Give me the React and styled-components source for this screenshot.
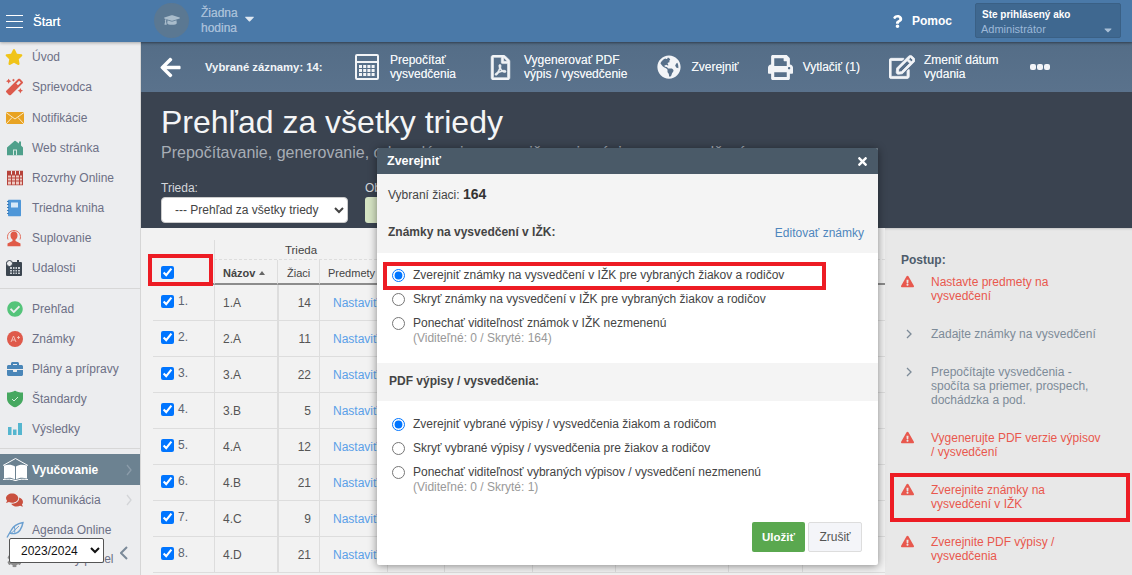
import React from "react";
import styled, { createGlobalStyle } from "styled-components";
import {
  FaStar, FaMagic, FaBriefcase, FaComments, FaCog, FaArrowLeft, FaRegFilePdf,
  FaGlobeAmericas, FaPrint, FaRegEdit, FaQuestion, FaTimes, FaExclamationTriangle,
  FaGraduationCap, FaCaretDown, FaCheckCircle,
} from "react-icons/fa";

const Global = createGlobalStyle`
  html, body { margin: 0; padding: 0; height: 100%; overflow: hidden; }
  body { font-family: "Liberation Sans", Arial, sans-serif; font-size: 12px; color: #555; }
  * { box-sizing: border-box; }
`;

const Page = styled.div`
  position: relative; width: 1132px; height: 575px; overflow: hidden;
  display: flex; flex-direction: column; background: #f2f2f2;
`;

/* top bar */
const TopBar = styled.header`
  flex: 0 0 42px; display: flex; align-items: center; background: #4a79a8; color: #fff;
  box-shadow: 0 1px 3px rgba(0,0,0,.3); position: relative; z-index: 2;
`;
const StartButton = styled.div`
  width: 154px; display: flex; align-items: center; padding-left: 6px; gap: 10px;
  font-size: 13px; text-shadow: 0 0 .4px #fff;
`;
const Burger = styled.span`
  display: block; width: 17px; height: 13px;
  border-top: 1px solid #fff; border-bottom: 1px solid #fff; position: relative;
  &::after { content: ""; position: absolute; left: 0; right: 0; top: 5px; height: 1px; background: #fff; }
`;
const Avatar = styled.span`
  width: 35px; height: 35px; border-radius: 50%; background: #5b7892; display: flex;
  align-items: center; justify-content: center; color: #a9bccb; font-size: 16px; margin-top: -2px;
`;
const Lesson = styled.div`
  margin-left: 12px; font-size: 12px; line-height: 15px; color: #a5bdd7; text-shadow: 0 0 .6px #a5bdd7;
`;
const LessonCaret = styled.span`
  margin-left: 4px; display: flex; font-size: 15px; color: #dfe8f1; margin-top: -6px;
`;
const TopRight = styled.div`
  margin-left: auto; display: flex; align-items: center; padding-right: 11px;
`;
const Help = styled.div`
  display: flex; align-items: center; gap: 8px; font-weight: bold; font-size: 12px; margin-right: 23px;
`;
const UserBox = styled.div`
  width: 146px; height: 35px; margin-top: -2px; background: #3f6890; border: 1px solid #3a6085; border-radius: 2px;
  padding: 4px 5px; position: relative; line-height: 14px;
`;
const UserLabel = styled.div`font-size: 10px; font-weight: bold; color: #fff; padding-left: 1px;`;
const UserName = styled.div`font-size: 11px; color: #9db8d8;`;
const UserCaret = styled.span`
  position: absolute; right: 6px; bottom: 1px; color: #a9bfd6; font-size: 12px; display: flex;
`;

/* body */
const Body = styled.div`flex: 1; display: flex; min-height: 0;`;
const Sidebar = styled.nav`
  flex: 0 0 141px; background: #ecedef; border-right: 1px solid #d6d6d6; display: flex; flex-direction: column;
`;
const Divider = styled.div`height: 1px; background: #d7d7d7; margin: ${(p) => p.$before}px 0 5px;`;
const NavItem = styled.div`
  height: ${(p) => p.$h || 30}px; flex: none; display: flex; align-items: center; position: relative;
  padding: 0 0 ${(p) => p.$lift || 0}px 32px; font-size: 12px;
  color: ${(p) => (p.$active ? "#fff" : "#6c7086")};
  font-weight: ${(p) => (p.$active ? "bold" : "normal")};
  background: ${(p) => (p.$active ? "#6c8291" : "transparent")};
`;
const NavIcon = styled.span`
  position: absolute; left: ${(p) => p.$left ?? 6}px; top: 50%; transform: translateY(-50%);
  display: flex; color: ${(p) => p.$color || "#888"}; font-size: ${(p) => p.$size || 16}px;
`;
const NavArrow = styled.span`
  position: absolute; right: 8px; top: 50%; transform: translateY(-50%); display: flex;
  color: ${(p) => p.$color || "#d3d5d8"};
`;

const Main = styled.main`flex: 1; display: flex; flex-direction: column; min-width: 0;`;

const Toolbar = styled.div`
  flex: 0 0 50px; display: flex; align-items: center; padding-left: 18px; color: #f2f5f8;
  background: linear-gradient(#546d87, #5a728c); font-size: 12px; line-height: 14px;
  text-shadow: 0 0 .5px rgba(255,255,255,.7); box-shadow: inset 0 2px 2px -1px rgba(0,0,0,.18);
`;
const BackIcon = styled.span`display: flex; font-size: 23px; color: #fff; margin-right: 23px;`;
const SelCount = styled.div`font-size: 11.3px; font-weight: bold; width: 119px; white-space: nowrap; text-shadow: none; margin-right: 31px;`;
const Tool = styled.div`
  display: flex; align-items: center; white-space: nowrap; gap: ${(p) => p.$gap || 11}px;
  margin-right: ${(p) => p.$mr || 31}px; font-size: 12px;
`;
const ToolIcon = styled.span`
  display: flex; color: #f2f4f7; font-size: ${(p) => p.$size || 24}px;
  svg { stroke: currentColor; stroke-width: ${(p) => p.$thick || 0}; }
`;
const Dots = styled.span`display: flex; gap: 1px;`;
const Dot = styled.i`display: block; width: 6px; height: 6px; border-radius: 2px; background: #f2f4f7;`;

const Hero = styled.section`
  flex: 0 0 136px; background: #3a4350; padding: 10px 20px 0; color: #fff;
`;
const Title = styled.h1`margin: 0; font-weight: normal; font-size: 32px; line-height: 40px; color: #f4f5f6; white-space: nowrap;`;
const Subtitle = styled.div`font-size: 16px; line-height: 20px; padding-top: 1px; color: #a7adb5; white-space: nowrap;`;
const Filters = styled.div`display: flex; gap: 17px; margin-top: 18px;`;
const FilterLabel = styled.div`font-size: 12px; line-height: 14px; color: #d4d7db; margin-bottom: 2px;`;
const FilterSelect = styled.select`
  display: block; width: 187px; height: 26px; border: 1px solid #ccc; border-radius: 4px; background: #fff;
  font: 12px "Liberation Sans", Arial, sans-serif; color: #444; padding-left: 9px;
`;
const GreenField = styled.div`width: 120px; height: 26px; border-radius: 3px; background: #d5e3c3;`;

const Content = styled.div`flex: 1; display: flex; min-height: 0;`;
const TableArea = styled.div`flex: 0 0 744px; padding: 12px 0 0 12px; overflow: hidden; background: #f2f2f2;`;
const Grid = styled.table`
  border-collapse: separate; border-spacing: 0; table-layout: fixed; width: 732px; font-size: 12px; color: #555;
`;
const GroupHead = styled.th`
  height: 20px; font-weight: normal; font-size: 11.5px; color: #444; border-left: 1px solid #ddd;
  border-bottom: 1px dashed #ddd; padding: 0; text-align: center;
`;
const BlankHead = styled.th`height: 20px; padding: 0; border-bottom: 0;`;
const ColHead = styled.th`
  height: 25px; padding: 2px 0 0 ${(p) => p.$pad ?? 8}px; text-align: left; font-size: 11px; color: #444;
  font-weight: ${(p) => (p.$bold ? "bold" : "normal")}; white-space: nowrap;
  border-bottom: 2px solid #8c8c8c; border-left: ${(p) => (p.$noLine ? 0 : "1px solid #ddd")};
`;
const SortMark = styled.span`
  display: inline-block; margin-left: 4px; vertical-align: 2px; border-left: 3px solid transparent;
  border-right: 3px solid transparent; border-bottom: 4px solid #666;
`;
const Cell = styled.td`
  height: 36px; padding: 1px ${(p) => (p.$right ? 8 : 0)}px 0 ${(p) => (p.$right ? 0 : p.$pad ?? 8)}px; vertical-align: middle;
  text-align: ${(p) => (p.$right ? "right" : "left")}; white-space: nowrap; overflow: hidden;
  border-bottom: 1px solid #ddd; border-left: ${(p) => (p.$noLine ? 0 : p.$thick ? "2px solid #ddd" : "1px solid #ddd")};
`;
const RowPick = styled.span`display: inline-flex; align-items: center; gap: 4px;`;
const RowNum = styled.span`font-size: 12px; color: #5c6470; margin-top: -1px;`;
const Check = styled.input.attrs({ type: "checkbox" })`display: block; margin: 0; width: 13px; height: 13px;`;
const LinkText = styled.span`color: #5aa0e8;`;

const StepsPanel = styled.aside`flex: 1; background: #e8e8e8; padding: 25px 0 0 16px; box-shadow: inset 0 3px 3px -3px rgba(0,0,0,.3);`;
const StepsTitle = styled.div`font-weight: bold; font-size: 12px; line-height: 14px; color: #4e5c6b; margin-bottom: 8px;`;
const Step = styled.div`
  display: flex; margin-bottom: 24px; line-height: 14px; font-size: 12px;
  color: ${(p) => (p.$warn ? "#e8584e" : "#7d8b98")};
`;
const StepIcon = styled.span`flex: 0 0 30px; display: flex; padding: ${(p) => (p.$warn ? "0" : "2px 0 0 5px")}; font-size: 13px;`;
const StepText = styled.div`width: 172px;`;

/* overlays */
const YearSelect = styled.select`
  position: absolute; left: 9px; top: 538px; width: 95px; height: 25px; background: #fff;
  border: 1px solid #555; border-radius: 2px; font: 12px "Liberation Sans", Arial, sans-serif; color: #111; padding-left: 7px; z-index: 3;
`;
const Collapse = styled.span`
  position: absolute; left: 120px; top: 546px; display: flex; color: #7b8a99; z-index: 3;
`;
const RedBox = styled.div`
  position: absolute; left: ${(p) => p.$x}px; top: ${(p) => p.$y}px; width: ${(p) => p.$w}px; height: ${(p) => p.$h}px;
  border: 4px solid #ed1c24; z-index: 6; pointer-events: none;
`;
const Modal = styled.div`
  position: absolute; left: 377px; top: 148px; width: 501px; height: 417px; background: #fff; z-index: 5;
  box-shadow: 0 1px 8px rgba(0,0,0,.45); border-radius: 2px; display: flex; flex-direction: column; font-size: 12px; color: #444;
`;
const ModalHead = styled.div`
  flex: 0 0 26px; background: #4a5a68; color: #fff; font-weight: bold; font-size: 12.5px; display: flex;
  align-items: center; justify-content: space-between; padding: 0 9px 0 10px; border-radius: 2px 2px 0 0;
`;
const CloseIcon = styled.span`display: flex; font-size: 13px;`;
const GraySection = styled.div`background: #f4f4f4; padding: ${(p) => p.$pad};`;
const Selected = styled.div`line-height: 16px; margin-bottom: 22px;`;
const SelectedNum = styled.b`font-size: 14px; color: #333;`;
const SectionRow = styled.div`display: flex; justify-content: space-between; line-height: 16px;`;
const SectionTitle = styled.b`display: block; font-size: 12px; line-height: 14px; color: #444;`;
const EditLink = styled.span`color: #4f86bd;`;
const WhiteSection = styled.div`padding: ${(p) => p.$pad};`;
const RadioRow = styled.label`display: flex; align-items: flex-start; min-height: 24px; line-height: 14px; padding-top: 5px;`;
const Radio = styled.input.attrs({ type: "radio" })`margin: 1px 8px 0 0; width: 13px; height: 13px; flex: none;`;
const Note = styled.div`color: #999; line-height: 14px; margin-top: 1px;`;
const Footer = styled.div`display: flex; justify-content: flex-end; gap: 3px; margin-top: auto; padding: 0 16px 13px 0;`;
const SaveBtn = styled.button`
  width: 53px; height: 30px; padding: 0; border: 0; border-radius: 2px; background: #5aa84f; color: #fff; font: bold 11.5px "Liberation Sans", Arial, sans-serif;
`;
const CancelBtn = styled.button`
  width: 54px; height: 30px; padding: 0; border: 1px solid #ddd; border-radius: 2px; background: #f4f5f9; color: #555; font: 12px "Liberation Sans", Arial, sans-serif;
`;

/* drawn icons */
const Chevron = ({ w = 6, h = 10, sw = 1.3, dir = "right" }) => (
  <svg width={w} height={h} viewBox={`0 0 ${w} ${h}`} fill="none" stroke="currentColor" strokeWidth={sw}>
    <path d={dir === "right" ? `M1 1l${w - 2} ${h / 2 - 1}L1 ${h - 1}` : `M${w - 1} 1L1 ${h / 2}l${w - 2} ${h / 2 - 1}`} />
  </svg>
);
const Calc = () => (
  <svg width="24" height="26" viewBox="0 0 24 26" fill="#f2f4f7">
    <path fillRule="evenodd" d="M2 0h20a2 2 0 0 1 2 2v22a2 2 0 0 1-2 2H2a2 2 0 0 1-2-2V2a2 2 0 0 1 2-2zM2 2v5h20V2zM2 9v15h20V9z" />
    {[0, 1, 2, 3].map((c) => [0, 1, 2].map((r) => (
      <rect key={c + "-" + r} x={4 + c * 4.2} y={11 + r * 4} width="3" height="3" />
    )))}
  </svg>
);
const Mail = () => (
  <svg width="18" height="12" viewBox="0 0 18 12">
    <rect width="18" height="12" fill="#e8a323" />
    <path d="M0 .5 9 7l9-6.500M0 12l6-6.500M18 12l-6-6.500" stroke="#fbe9c6" strokeWidth="1" fill="none" />
  </svg>
);
const House = () => (
  <svg width="16" height="15" viewBox="0 0 16 15">
    <path d="M8 0l4 3V1h2v4l2 2v8H0V7z" fill="#4fa08b" />
    <path d="M6 15V9h4v6h-1v-5H7v5z" fill="#d5e8e2" />
  </svg>
);
const TimeTable = () => (
  <svg width="16" height="15" viewBox="0 0 16 15">
    <rect width="16" height="15" fill="#b7433b" />
    <path d="M1 5h3v2H1zM5 5h3v2H5zM9 5h3v2H9zM13 5h2v2h-2zM1 8h3v2H1zM5 8h3v2H5zM9 8h3v2H9zM13 8h2v2h-2zM1 11h3v3H1zM5 11h3v3H5zM9 11h3v3H9zM13 11h2v3h-2z" fill="#eec9c2" />
    <path d="M4.500 0v4M8.500 0v4M12.500 0v4" stroke="#ecedef" />
  </svg>
);
const Notebook = () => (
  <svg width="14" height="17" viewBox="0 0 14 17">
    <rect x="1" width="13" height="17" rx="1" fill="#4f97d8" />
    <rect x="4" y="3" width="7" height="5" fill="#d7e9f8" />
    <path d="M0 2h2M0 5h2M0 8h2M0 11h2M0 14h2" stroke="#3b7cb8" />
  </svg>
);
const Substitute = () => (
  <svg width="16" height="17" viewBox="0 0 16 17">
    <path d="M2 10a6.500 6.500 0 1 1 12 0" stroke="#e2705f" fill="none" />
    <path d="M8 2a3.500 3.500 0 0 1 3.500 4c0 2-1 3.500-2 4v1.500l5 2.500v3H1.500v-3l5-2.500V10c-1-.5-2-2-2-4A3.500 3.500 0 0 1 8 2z" fill="#e05a48" />
  </svg>
);
const CalDark = () => (
  <svg width="16" height="16" viewBox="0 0 16 16">
    <rect y="2" width="16" height="14" rx="1" fill="#3c4650" />
    <rect x="4" y="7" width="10" height="7" fill="#c9ced3" />
    <path d="M6.500 7v7M9 7v7M11.500 7v7M4 9.500h10M4 12h10" stroke="#3c4650" />
    <circle cx="3.500" cy="3.500" r="3" fill="#ecedef" stroke="#3c4650" />
    <rect x="11" y="0" width="2" height="4" fill="#3c4650" />
  </svg>
);
const Grades = () => (
  <svg width="16" height="16" viewBox="0 0 16 16">
    <circle cx="8" cy="8" r="8" fill="#df5a4b" />
    <path d="M4 11 6.500 5 9 11M5 9h3M10 6.500h3M11.500 5v3" stroke="#f4c9c2" strokeWidth=".9" fill="none" />
  </svg>
);
const Shield = () => (
  <svg width="16" height="17" viewBox="0 0 16 17">
    <path d="M8 0c2 1.500 4.500 2 8 2v6c0 4-3 7-8 9-5-2-8-5-8-9V2c3.500 0 6-.5 8-2z" fill="#46a860" />
    <path d="m5 8.500 2 2 4-4" stroke="#d8f0de" fill="none" />
  </svg>
);
const Bars = () => (
  <svg width="14" height="12" viewBox="0 0 14 12" fill="#55b6cf">
    <rect y="4" width="3.500" height="8" /><rect x="5" y="6.500" width="3.500" height="5.500" /><rect x="10" width="4" height="12" />
  </svg>
);
const OpenBook = () => (
  <svg width="27" height="25" viewBox="0 0 27 25">
    <path d="M1 8 13.500 1 26 8" stroke="#fff" fill="none" />
    <path d="M2 8c4-1 8-1 11 1v13c-3-2-7-2-11-1zM25 8c-4-1-8-1-11 1v13c3-2 7-2 11-1z" fill="#fff" />
    <path d="M1 22c4-.5 9-.5 12 1h1c3-1.500 8-1.500 12-1" stroke="#fff" fill="none" />
  </svg>
);
const Quill = () => (
  <svg width="18" height="17" viewBox="0 0 18 17" fill="none" stroke="#6a9fd0" strokeWidth="1.400">
    <path d="M1 16 5 9c2-4 7-7 12-8-1 5-3 10-8 11-1.500.3-3 .3-5-.5" />
    <path d="M5 12 13 4.500M8 5c1 2 1 4 .5 6" strokeWidth="1" />
  </svg>
);

const navTop = [
  ["Úvod", <FaStar />, "#f0c419", 18, 5, 30],
  ["Sprievodca", <FaMagic />, "#dc5a4c", 17, 6, 30],
  ["Notifikácie", <Mail />, "", 16, 6, 31],
  ["Web stránka", <House />, "", 16, 7, 30],
  ["Rozvrhy Online", <TimeTable />, "", 16, 7, 30],
  ["Triedna kniha", <Notebook />, "", 16, 7, 30],
  ["Suplovanie", <Substitute />, "", 16, 6, 30],
  ["Udalosti", <CalDark />, "", 16, 6, 30],
];
const navMid = [
  ["Prehľad", <FaCheckCircle />, "#54c47a", 16, 7],
  ["Známky", <Grades />, "", 16, 7],
  ["Plány a prípravy", <FaBriefcase />, "#4a86b8", 16, 7],
  ["Štandardy", <Shield />, "", 16, 7],
  ["Výsledky", <Bars />, "", 14, 8],
];
const rows = [["1.A", 14], ["2.A", 11], ["3.A", 22], ["3.B", 5], ["4.A", 12], ["4.B", 21], ["4.C", 9], ["4.D", 21]];
const steps = [
  [true, "Nastavte predmety na vysvedčení"],
  [false, "Zadajte známky na vysvedčení"],
  [false, "Prepočítajte vysvedčenia - spočíta sa priemer, prospech, dochádzka a pod."],
  [true, "Vygenerujte PDF verzie výpisov / vysvedčení"],
  [true, "Zverejnite známky na vysvedčení v IŽK"],
  [true, "Zverejnite PDF výpisy / vysvedčenia"],
];

export default function App() {
  return (
    <Page>
      <Global />
      <TopBar>
        <StartButton><Burger />Štart</StartButton>
        <Avatar><FaGraduationCap /></Avatar>
        <Lesson>Žiadna<br />hodina</Lesson>
        <LessonCaret><FaCaretDown /></LessonCaret>
        <TopRight>
          <Help><FaQuestion size={13} />Pomoc</Help>
          <UserBox>
            <UserLabel>Ste prihlásený ako</UserLabel>
            <UserName>Administrátor</UserName>
            <UserCaret><FaCaretDown /></UserCaret>
          </UserBox>
        </TopRight>
      </TopBar>
      <Body>
        <Sidebar>
          {navTop.map(([t, ic, c, s, l, h]) => (
            <NavItem key={t} $h={h}><NavIcon $color={c} $size={s} $left={l}>{ic}</NavIcon>{t}</NavItem>
          ))}
          <Divider $before={5} />
          {navMid.map(([t, ic, c, s, l]) => (
            <NavItem key={t}><NavIcon $color={c} $size={s} $left={l}>{ic}</NavIcon>{t}</NavItem>
          ))}
          <Divider $before={4} />
          <NavItem $active $h={31}><NavIcon $left={2}><OpenBook /></NavIcon>Vyučovanie<NavArrow $color="#8b9ca9"><Chevron h={12} /></NavArrow></NavItem>
          <NavItem><NavIcon $color="#c9503f" $size={17} $left={6}><FaComments /></NavIcon>Komunikácia<NavArrow><Chevron h={12} /></NavArrow></NavItem>
          <NavItem><NavIcon $left={6}><Quill /></NavIcon>Agenda Online</NavItem>
          <NavItem $lift={3}><NavIcon $color="#8d8d8d" $size={15} $left={7}><FaCog /></NavIcon>Učiteľský panel</NavItem>
        </Sidebar>
        <Main>
          <Toolbar>
            <BackIcon><FaArrowLeft /></BackIcon>
            <SelCount>Vybrané záznamy: 14:</SelCount>
            <Tool $mr={32}><ToolIcon><Calc /></ToolIcon><span>Prepočítať<br />vysvedčenia</span></Tool>
            <Tool $mr={30}><ToolIcon $size={25} $thick={12}><FaRegFilePdf /></ToolIcon><span>Vygenerovať PDF<br />výpis / vysvedčenie</span></Tool>
            <Tool $gap={10} $mr={29}><ToolIcon><FaGlobeAmericas /></ToolIcon><span>Zverejniť</span></Tool>
            <Tool $gap={10} $mr={29}><ToolIcon $size={25}><FaPrint /></ToolIcon><span>Vytlačiť (1)</span></Tool>
            <Tool $gap={9}><ToolIcon $size={26} $thick={18}><FaRegEdit /></ToolIcon><span>Zmeniť dátum<br />vydania</span></Tool>
            <Dots><Dot /><Dot /><Dot /></Dots>
          </Toolbar>
          <Hero>
            <Title>Prehľad za všetky triedy</Title>
            <Subtitle>Prepočítavanie, generovanie, odovzdávanie a zverejňovanie výpisov a vysvedčení</Subtitle>
            <Filters>
              <div>
                <FilterLabel>Trieda:</FilterLabel>
                <FilterSelect><option>--- Prehľad za všetky triedy</option></FilterSelect>
              </div>
              <div>
                <FilterLabel>Obdobie:</FilterLabel>
                <GreenField />
              </div>
            </Filters>
          </Hero>
          <Content>
            <TableArea>
              <Grid>
                <colgroup>
                  {[61, 63, 42, 68, 57, 88, 83, 113, 74, 83].map((w, i) => <col key={i} width={w} />)}
                </colgroup>
                <thead>
                  <tr>
                    <BlankHead />
                    <GroupHead colSpan={3}>Trieda</GroupHead>
                    <GroupHead colSpan={6} />
                  </tr>
                  <tr>
                    <ColHead $noLine $pad={8}><Check defaultChecked /></ColHead>
                    <ColHead $bold>Názov<SortMark /></ColHead>
                    <ColHead $pad={9}>Žiaci</ColHead>
                    <ColHead>Predmety</ColHead>
                    {[0, 1, 2, 3, 4, 5].map((i) => <ColHead key={i} />)}
                  </tr>
                </thead>
                <tbody>
                  {rows.map(([n, c], i) => (
                    <tr key={n}>
                      <Cell $noLine><RowPick><Check defaultChecked /><RowNum>{i + 1}.</RowNum></RowPick></Cell>
                      <Cell>{n}</Cell>
                      <Cell $right $thick>{c}</Cell>
                      <Cell $pad={13}><LinkText>Nastaviť</LinkText></Cell>
                      {[0, 1, 2, 3, 4, 5].map((k) => <Cell key={k} />)}
                    </tr>
                  ))}
                </tbody>
              </Grid>
            </TableArea>
            <StepsPanel>
              <StepsTitle>Postup:</StepsTitle>
              {steps.map(([w, t]) => (
                <Step key={t} $warn={w}>
                  <StepIcon $warn={w}>{w ? <FaExclamationTriangle /> : <Chevron />}</StepIcon>
                  <StepText>{t}</StepText>
                </Step>
              ))}
            </StepsPanel>
          </Content>
        </Main>
      </Body>

      <YearSelect><option>2023/2024</option></YearSelect>
      <Collapse><Chevron w={8} h={14} sw={2} dir="left" /></Collapse>

      <Modal>
        <ModalHead>Zverejniť<CloseIcon><FaTimes /></CloseIcon></ModalHead>
        <GraySection $pad="12px 14px 12px 11px">
          <Selected>Vybraní žiaci: <SelectedNum>164</SelectedNum></Selected>
          <SectionRow><SectionTitle>Známky na vysvedčení v IŽK:</SectionTitle><EditLink>Editovať známky</EditLink></SectionRow>
        </GraySection>
        <WhiteSection $pad="10px 15px 18px">
          <RadioRow><Radio name="a" defaultChecked />Zverejniť známky na vysvedčení v IŽK pre vybraných žiakov a rodičov</RadioRow>
          <RadioRow><Radio name="a" />Skryť známky na vysvedčení v IŽK pre vybraných žiakov a rodičov</RadioRow>
          <RadioRow><Radio name="a" /><div>Ponechať viditeľnosť známok v IŽK nezmenenú<Note>(Viditeľné: 0 / Skryté: 164)</Note></div></RadioRow>
        </WhiteSection>
        <GraySection $pad="11px 12px 13px">
          <SectionTitle>PDF výpisy / vysvedčenia:</SectionTitle>
        </GraySection>
        <WhiteSection $pad="11px 15px 0">
          <RadioRow><Radio name="b" defaultChecked />Zverejniť vybrané výpisy / vysvedčenia žiakom a rodičom</RadioRow>
          <RadioRow><Radio name="b" />Skryť vybrané výpisy / vysvedčenia pre žiakov a rodičov</RadioRow>
          <RadioRow><Radio name="b" /><div>Ponechať viditeľnosť vybraných výpisov / vysvedčení nezmenenú<Note>(Viditeľné: 0 / Skryté: 1)</Note></div></RadioRow>
        </WhiteSection>
        <Footer><SaveBtn>Uložiť</SaveBtn><CancelBtn>Zrušiť</CancelBtn></Footer>
      </Modal>

      <RedBox $x={148} $y={254} $w={65} $h={32} />
      <RedBox $x={383} $y={262} $w={443} $h={28} />
      <RedBox $x={890} $y={473} $w={240} $h={49} />
    </Page>
  );
}
